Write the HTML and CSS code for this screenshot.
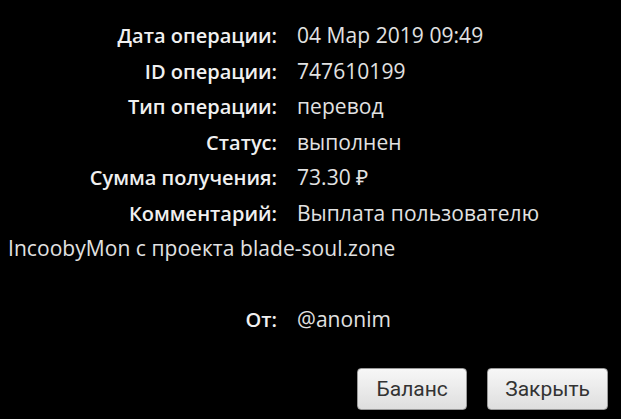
FILE: index.html
```html
<!DOCTYPE html>
<html lang="ru">
<head>
    <meta charset="UTF-8">
    <meta name="viewport" content="width=device-width, initial-scale=1.0">
    <title>Детали операции</title>
    <link rel="stylesheet" href="styles.css">
</head>
<body>
    <!-- детали операции -->
    <div class="details">
        <div class="row"><span class="label">Дата операции:</span><span class="value">04 Мар 2019 09:49</span></div>
        <div class="row"><span class="label">ID операции:</span><span class="value">747610199</span></div>
        <div class="row"><span class="label">Тип операции:</span><span class="value">перевод</span></div>
        <div class="row"><span class="label">Статус:</span><span class="value">выполнен</span></div>
        <div class="row"><span class="label">Сумма получения:</span><span class="value">73.30 ₽</span></div>
        <div class="row"><span class="label">Комментарий:</span><span class="value">Выплата пользователю IncoobyMon с проекта blade-soul.zone</span></div>
        <div class="row row-from"><span class="label">От:</span><span class="value">@anonim</span></div>
    </div>

    <div class="actions">
        <button type="button" class="btn-balance">Баланс</button>
        <button type="button">Закрыть</button>
    </div>
</body>
</html>
```

FILE: styles.css
```css
body { font-family: "Open Sans", Lato, sans-serif; margin: 0; padding: 0 8px; background-color: #000; color: #e6e6e6; }
.details { padding-top: 18px; font-size: 20px; line-height: 35.5px; }
.label { display: inline-block; width: 269px; margin-right: 20px; text-align: right; font-weight: 600; color: #f0f0f0; }
.value { font-size: 21px; letter-spacing: 0.05px; color: #e2e2e2; }
.row-from { margin-top: 35.5px; }
.actions { display: flex; justify-content: flex-end; gap: 20px; margin-top: 30px; padding-right: 5px; }
button { height: 42px; padding: 0 17px; font-family: Roboto, sans-serif; font-size: 21px; color: #333; background: linear-gradient(#f7f7f7, #dedede); border: 1px solid #9a9a9a; border-radius: 4px; cursor: pointer; }
button:hover { background: linear-gradient(#ffffff, #e6e6e6); }
.btn-balance { min-width: 110px; }
```
